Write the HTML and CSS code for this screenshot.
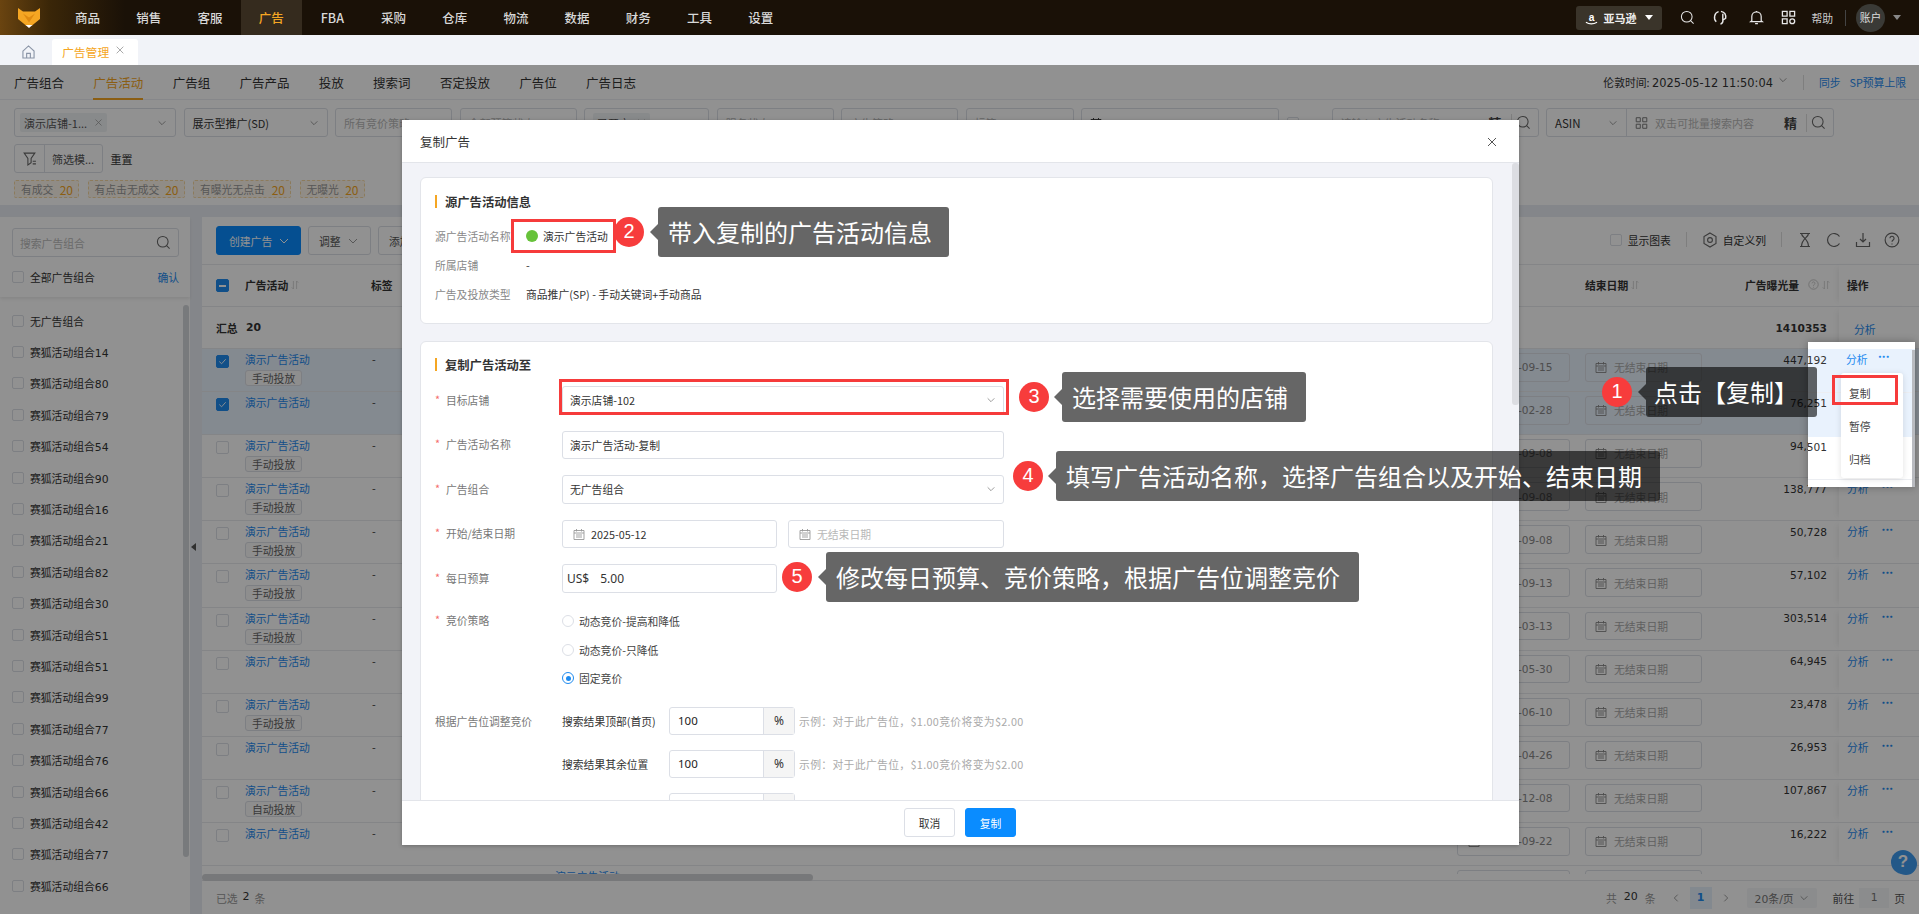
FILE: index.html
```html
<!DOCTYPE html>
<html lang="zh-CN">
<head>
<meta charset="utf-8">
<title>复制广告</title>
<link rel="stylesheet" href="styles.css">
</head>
<body>
<svg class="defs" width="0" height="0">
  <symbol id="i-search" viewBox="0 0 16 16"><circle cx="7.2" cy="7.2" r="5.7" fill="none" stroke="currentColor" stroke-width="1.1"/><path d="M11.3 11.3l3.2 3.2" fill="none" stroke="currentColor" stroke-width="1.1"/></symbol>
  <symbol id="i-chev" viewBox="0 0 12 12"><path d="M2 4l4 4 4-4" fill="none" stroke="currentColor" stroke-width="1"/></symbol>
  <symbol id="i-cal" viewBox="0 0 12 12"><path d="M1 2.5h10v9H1zM1 5h10M3.5 1v2.5M8.500 1v2.500M3 7h6M3 9h6" fill="none" stroke="currentColor" stroke-width=".9"/></symbol>
  <symbol id="i-x" viewBox="0 0 12 12"><path d="M2 2l8 8M10 2l-8 8" fill="none" stroke="currentColor" stroke-width="1"/></symbol>
  <symbol id="i-sort" viewBox="0 0 10 12"><path d="M3 1v10L1 9M7 11V1l2 2" fill="none" stroke="currentColor" stroke-width="1"/></symbol>
  <symbol id="i-grid" viewBox="0 0 16 16"><path d="M1.500 1.500h5v5h-5zM9.500 1.500h5v5h-5zM1.500 9.500h5v5h-5zM9.500 9.500h5v5h-5z" fill="none" stroke="currentColor" stroke-width="1.200"/></symbol>
  <symbol id="i-check" viewBox="0 0 12 12"><path d="M2.500 6l2.500 2.500 4.500-5" fill="none" stroke="#fff" stroke-width="1"/></symbol>
  <symbol id="i-q" viewBox="0 0 14 14"><circle cx="7" cy="7" r="6" fill="none" stroke="currentColor" stroke-width="1"/><path d="M5.200 5.500a1.800 1.800 0 1 1 2.800 1.500c-.7.500-1 .8-1 1.600M7 10v1" fill="none" stroke="currentColor" stroke-width="1"/></symbol>
</svg>

<div class="app">
  <header class="topbar">
    <svg class="logo" viewBox="0 0 22 20"><path d="M0 0l5 3.500h12L22 0v11l-8 6.500H8L0 11z" fill="#f5a623"/><path d="M5 5.500l6 4 6-4-6 9z" fill="#e08a10"/><path d="M7.500 17h7L11 20z" fill="#fff"/></svg>
    <nav class="mainnav">
      <a class="navitem">商品</a><a class="navitem">销售</a><a class="navitem">客服</a><a class="navitem navitem-on">广告</a><a class="navitem">FBA</a><a class="navitem">采购</a><a class="navitem">仓库</a><a class="navitem">物流</a><a class="navitem">数据</a><a class="navitem">财务</a><a class="navitem">工具</a><a class="navitem">设置</a>
    </nav>
    <div class="topright">
      <div class="market">
        <svg class="market-a" viewBox="0 0 14 16"><text x="7" y="11" text-anchor="middle" class="market-glyph">a</text><path d="M1 12.500c3.500 2.300 8 2.300 12 0" fill="none" stroke="#fff" stroke-width="1.300"/></svg>
        <span>亚马逊</span><i class="caret"></i>
      </div>
      <svg class="topicon ti-search" viewBox="0 0 16 16"><use href="#i-search"/></svg>
      <svg class="topicon ti-head" viewBox="0 0 16 16"><path d="M4 12.500C.8 9.500 1.800 3 6.500 1.800M9 1.500c3.800.8 5.600 3.800 5 7.500L11 10.800V4M8.500 15c1.800-.4 2.700-1.800 2.700-4.200" fill="none" stroke="#e8e8e8" stroke-width="1.500"/></svg>
      <svg class="topicon ti-bell" viewBox="0 0 16 16"><path d="M3 11.500V7a5 5 0 0 1 10 0v4.500l1.200 1H1.800zM6.500 14.500h3M8 1v1" fill="none" stroke="#e8e8e8" stroke-width="1.300"/></svg>
      <svg class="topicon ti-apps" viewBox="0 0 16 16"><path d="M1.500 1.500h5v5h-5zM9.500 1.500h5v5h-5zM1.500 9.500h5v5h-5z" fill="none" stroke="#e8e8e8" stroke-width="1.400"/><circle cx="12" cy="12" r="2.600" fill="none" stroke="#e8e8e8" stroke-width="1.400"/></svg>
      <span class="help-t">帮助</span>
      <i class="topdiv"></i>
      <span class="avatar">账户</span>
      <i class="caret caret-dim"></i>
    </div>
  </header>

  <div class="tabbar">
    <svg class="home" viewBox="0 0 14 15"><path d="M1 6.500L7 1l6 5.500V14H1zM5 14V9h4v5" fill="none" stroke="#8a94a6" stroke-width="1.200"/></svg>
    <div class="tab"><span>广告管理</span><svg class="tab-x" viewBox="0 0 12 12"><use href="#i-x"/></svg></div>
  </div>

  <main class="page">
    <div class="subnav">
      <a class="sub">广告组合</a><a class="sub sub-on">广告活动</a><a class="sub">广告组</a><a class="sub">广告产品</a><a class="sub">投放</a><a class="sub">搜索词</a><a class="sub">否定投放</a><a class="sub">广告位</a><a class="sub">广告日志</a>
      <div class="subright">
        <span class="clock">伦敦时间: <span class="dv">2025-05-12 11:50:04</span></span>
        <svg class="ic10 clock-ch" viewBox="0 0 12 12"><use href="#i-chev"/></svg>
        <i class="vline"></i>
        <a class="lnk">同步</a><a class="lnk lnk2">SP预算上限</a>
      </div>
    </div>

    <section class="filters">
      <div class="frow">
        <div class="fbox w162"><span class="ftag">演示店铺-1... <svg class="ic9" viewBox="0 0 12 12"><use href="#i-x"/></svg></span><svg class="ic10 end" viewBox="0 0 12 12"><use href="#i-chev"/></svg></div>
        <div class="fbox w144"><span>展示型推广(SD)</span><svg class="ic10 end" viewBox="0 0 12 12"><use href="#i-chev"/></svg></div>
        <div class="fbox w117 ph"><span>所有竞价策略</span></div>
        <div class="fbox w117 ph"><span>全部预算状态</span></div>
        <div class="fbox w125"><span class="ftag">已开启 <svg class="ic9" viewBox="0 0 12 12"><use href="#i-x"/></svg></span></div>
        <div class="fbox w117 ph"><span>服务状态</span></div>
        <div class="fbox w117 ph"><span>广告策略</span></div>
        <div class="fbox w108 ph"><span>标签</span></div>
        <div class="fbox w198"><svg class="ic12" viewBox="0 0 12 12"><use href="#i-cal"/></svg><span class="datepair">2025-05-01 ~ 2025-05-07</span></div>
        <i class="cb cb-f"></i><span class="dots3">...</span>
        <div class="fbox w207 ph"><span>请输入广告活动名称</span><b class="jing">精</b><i class="vsep"></i><svg class="ic14" viewBox="0 0 16 16"><use href="#i-search"/></svg></div>
        <div class="fbox w288 fbox-asin">
          <div class="asin"><span>ASIN</span><svg class="ic10" viewBox="0 0 12 12"><use href="#i-chev"/></svg></div>
          <svg class="ic14 gridic" viewBox="0 0 16 16"><use href="#i-grid"/></svg><span class="ph-t">双击可批量搜索内容</span><b class="jing jing2">精</b><i class="vsep"></i><svg class="ic14" viewBox="0 0 16 16"><use href="#i-search"/></svg>
        </div>
      </div>
      <div class="frow">
        <div class="fsave"><span class="fsave-ic"><svg class="ic14" viewBox="0 0 14 14"><path d="M2 2h10L8.500 7v4l-3 2V7zM10 9.500h3M10 12h3" fill="none" stroke="currentColor" stroke-width="1"/></svg></span><span class="fsave-t">筛选模...</span></div>
        <span class="reset">重置</span>
      </div>
      <div class="chips">
        <span class="chip w65">有成交<b>20</b></span><span class="chip w97">有点击无成交<b>20</b></span><span class="chip w98">有曝光无点击<b>20</b></span><span class="chip w65">无曝光<b>20</b></span>
      </div>
    </section>

    <div class="panels">
      <aside class="side">
        <div class="side-head">
          <div class="sinput"><span>搜索广告组合</span><svg class="ic14" viewBox="0 0 16 16"><use href="#i-search"/></svg></div>
          <div class="sall"><i class="cb"></i><span>全部广告组合</span><a class="lnk sok">确认</a></div>
        </div>
        <ul class="slist">
          <li><i class="cb"></i>无广告组合</li>
          <li><i class="cb"></i>赛狐活动组合14</li>
          <li><i class="cb"></i>赛狐活动组合80</li>
          <li><i class="cb"></i>赛狐活动组合79</li>
          <li><i class="cb"></i>赛狐活动组合54</li>
          <li><i class="cb"></i>赛狐活动组合90</li>
          <li><i class="cb"></i>赛狐活动组合16</li>
          <li><i class="cb"></i>赛狐活动组合21</li>
          <li><i class="cb"></i>赛狐活动组合82</li>
          <li><i class="cb"></i>赛狐活动组合30</li>
          <li><i class="cb"></i>赛狐活动组合51</li>
          <li><i class="cb"></i>赛狐活动组合51</li>
          <li><i class="cb"></i>赛狐活动组合99</li>
          <li><i class="cb"></i>赛狐活动组合77</li>
          <li><i class="cb"></i>赛狐活动组合76</li>
          <li><i class="cb"></i>赛狐活动组合66</li>
          <li><i class="cb"></i>赛狐活动组合42</li>
          <li><i class="cb"></i>赛狐活动组合77</li>
          <li><i class="cb"></i>赛狐活动组合66</li>
        </ul>
        <i class="side-scroll"></i>
      </aside>
      <div class="gutter"><span class="handle"></span></div>
      <section class="tablewrap">
        <div class="toolbar">
          <button class="btn btn-p">创建广告<svg class="ic12" viewBox="0 0 12 12"><use href="#i-chev"/></svg></button>
          <button class="btn">调整<svg class="ic12" viewBox="0 0 12 12"><use href="#i-chev"/></svg></button>
          <button class="btn">添加标签</button>
          <div class="tools">
            <i class="cb"></i><span class="t-show">显示图表</span><i class="vline"></i>
            <svg class="ic16" viewBox="0 0 16 16"><path d="M8 1l6 3.500v7L8 15l-6-3.500v-7z" fill="none" stroke="currentColor" stroke-width="1.100"/><circle cx="8" cy="8" r="2.400" fill="none" stroke="currentColor" stroke-width="1.100"/></svg><span class="t-col">自定义列</span><i class="vline"></i>
            <svg class="ic16" viewBox="0 0 16 16"><path d="M3 1.500h10M3 14.500h10M4.500 1.500c0 4 7 5 7 13M11.500 1.500c0 4-7 5-7 13" fill="none" stroke="currentColor" stroke-width="1.200"/></svg>
            <svg class="ic16" viewBox="0 0 16 16"><path d="M13.500 4.500A6.500 6.500 0 1 0 13.500 11.500" fill="none" stroke="currentColor" stroke-width="1.200"/></svg>
            <svg class="ic16" viewBox="0 0 16 16"><path d="M8 1v9M5 7l3 3 3-3M1.500 10v4.500h13V10" fill="none" stroke="currentColor" stroke-width="1.200"/></svg>
            <svg class="ic16" viewBox="0 0 14 14"><use href="#i-q"/></svg>
          </div>
        </div>

        <div class="tr thead">
          <span><i class="cb cb-tb cb-on cb-ind"></i></span>
          <span class="th">广告活动<svg class="sort" viewBox="0 0 10 12"><use href="#i-sort"/></svg></span>
          <span class="th">标签</span>
          <span></span>
          <span class="th">结束日期<svg class="sort" viewBox="0 0 10 12"><use href="#i-sort"/></svg></span>
          <span class="th th-num">广告曝光量<svg class="qm" viewBox="0 0 14 14"><use href="#i-q"/></svg><svg class="sort" viewBox="0 0 10 12"><use href="#i-sort"/></svg></span>
          <span></span>
          <span class="th op">操作</span>
        </div>
        <div class="tr tsum">
          <span class="th sumlab">汇总</span>
          <span class="th dv sumval">20</span>
          <span></span><span></span><span></span>
          <span class="num numb">1410353</span>
          <span></span>
          <span class="op"><a class="lnk sum-an">分析</a></span>
        </div>

        <div class="tbody">
          <div class="tr row row-sel"><span><i class="cb cb-tb cb-on"><svg viewBox="0 0 12 12"><use href="#i-check"/></svg></i></span><span class="camp"><a class="lnk">演示广告活动</a><em class="tag">手动投放</em></span><span class="dash">-</span><span class="dbox dbox-s"><svg class="ic12" viewBox="0 0 12 12"><use href="#i-cal"/></svg>2023-09-15</span><span class="dbox"><svg class="ic12" viewBox="0 0 12 12"><use href="#i-cal"/></svg>无结束日期</span><span class="num">447,192</span><span></span><span class="op"><a class="lnk">分析</a><b class="more">•••</b></span></div>
          <div class="tr row row-sel"><span><i class="cb cb-tb cb-on"><svg viewBox="0 0 12 12"><use href="#i-check"/></svg></i></span><span class="camp"><a class="lnk">演示广告活动</a></span><span class="dash">-</span><span class="dbox dbox-s"><svg class="ic12" viewBox="0 0 12 12"><use href="#i-cal"/></svg>2024-02-28</span><span class="dbox"><svg class="ic12" viewBox="0 0 12 12"><use href="#i-cal"/></svg>无结束日期</span><span class="num">76,251</span><span></span><span class="op"><a class="lnk">分析</a><b class="more">•••</b></span></div>
          <div class="tr row"><span><i class="cb cb-tb"></i></span><span class="camp"><a class="lnk">演示广告活动</a><em class="tag">手动投放</em></span><span class="dash">-</span><span class="dbox dbox-s"><svg class="ic12" viewBox="0 0 12 12"><use href="#i-cal"/></svg>2023-09-08</span><span class="dbox"><svg class="ic12" viewBox="0 0 12 12"><use href="#i-cal"/></svg>无结束日期</span><span class="num">94,501</span><span></span><span class="op"><a class="lnk">分析</a><b class="more">•••</b></span></div>
          <div class="tr row"><span><i class="cb cb-tb"></i></span><span class="camp"><a class="lnk">演示广告活动</a><em class="tag">手动投放</em></span><span class="dash">-</span><span class="dbox dbox-s"><svg class="ic12" viewBox="0 0 12 12"><use href="#i-cal"/></svg>2023-09-08</span><span class="dbox"><svg class="ic12" viewBox="0 0 12 12"><use href="#i-cal"/></svg>无结束日期</span><span class="num">138,777</span><span></span><span class="op"><a class="lnk">分析</a><b class="more">•••</b></span></div>
          <div class="tr row"><span><i class="cb cb-tb"></i></span><span class="camp"><a class="lnk">演示广告活动</a><em class="tag">手动投放</em></span><span class="dash">-</span><span class="dbox dbox-s"><svg class="ic12" viewBox="0 0 12 12"><use href="#i-cal"/></svg>2023-09-08</span><span class="dbox"><svg class="ic12" viewBox="0 0 12 12"><use href="#i-cal"/></svg>无结束日期</span><span class="num">50,728</span><span></span><span class="op"><a class="lnk">分析</a><b class="more">•••</b></span></div>
          <div class="tr row"><span><i class="cb cb-tb"></i></span><span class="camp"><a class="lnk">演示广告活动</a><em class="tag">手动投放</em></span><span class="dash">-</span><span class="dbox dbox-s"><svg class="ic12" viewBox="0 0 12 12"><use href="#i-cal"/></svg>2023-09-13</span><span class="dbox"><svg class="ic12" viewBox="0 0 12 12"><use href="#i-cal"/></svg>无结束日期</span><span class="num">57,102</span><span></span><span class="op"><a class="lnk">分析</a><b class="more">•••</b></span></div>
          <div class="tr row"><span><i class="cb cb-tb"></i></span><span class="camp"><a class="lnk">演示广告活动</a><em class="tag">手动投放</em></span><span class="dash">-</span><span class="dbox dbox-s"><svg class="ic12" viewBox="0 0 12 12"><use href="#i-cal"/></svg>2024-03-13</span><span class="dbox"><svg class="ic12" viewBox="0 0 12 12"><use href="#i-cal"/></svg>无结束日期</span><span class="num">303,514</span><span></span><span class="op"><a class="lnk">分析</a><b class="more">•••</b></span></div>
          <div class="tr row"><span><i class="cb cb-tb"></i></span><span class="camp"><a class="lnk">演示广告活动</a></span><span class="dash">-</span><span class="dbox dbox-s"><svg class="ic12" viewBox="0 0 12 12"><use href="#i-cal"/></svg>2023-05-30</span><span class="dbox"><svg class="ic12" viewBox="0 0 12 12"><use href="#i-cal"/></svg>无结束日期</span><span class="num">64,945</span><span></span><span class="op"><a class="lnk">分析</a><b class="more">•••</b></span></div>
          <div class="tr row"><span><i class="cb cb-tb"></i></span><span class="camp"><a class="lnk">演示广告活动</a><em class="tag">手动投放</em></span><span class="dash">-</span><span class="dbox dbox-s"><svg class="ic12" viewBox="0 0 12 12"><use href="#i-cal"/></svg>2023-06-10</span><span class="dbox"><svg class="ic12" viewBox="0 0 12 12"><use href="#i-cal"/></svg>无结束日期</span><span class="num">23,478</span><span></span><span class="op"><a class="lnk">分析</a><b class="more">•••</b></span></div>
          <div class="tr row"><span><i class="cb cb-tb"></i></span><span class="camp"><a class="lnk">演示广告活动</a></span><span class="dash">-</span><span class="dbox dbox-s"><svg class="ic12" viewBox="0 0 12 12"><use href="#i-cal"/></svg>2024-04-26</span><span class="dbox"><svg class="ic12" viewBox="0 0 12 12"><use href="#i-cal"/></svg>无结束日期</span><span class="num">26,953</span><span></span><span class="op"><a class="lnk">分析</a><b class="more">•••</b></span></div>
          <div class="tr row"><span><i class="cb cb-tb"></i></span><span class="camp"><a class="lnk">演示广告活动</a><em class="tag">自动投放</em></span><span class="dash">-</span><span class="dbox dbox-s"><svg class="ic12" viewBox="0 0 12 12"><use href="#i-cal"/></svg>2023-12-08</span><span class="dbox"><svg class="ic12" viewBox="0 0 12 12"><use href="#i-cal"/></svg>无结束日期</span><span class="num">107,867</span><span></span><span class="op"><a class="lnk">分析</a><b class="more">•••</b></span></div>
          <div class="tr row"><span><i class="cb cb-tb"></i></span><span class="camp"><a class="lnk">演示广告活动</a></span><span class="dash">-</span><span class="dbox dbox-s"><svg class="ic12" viewBox="0 0 12 12"><use href="#i-cal"/></svg>2023-09-22</span><span class="dbox"><svg class="ic12" viewBox="0 0 12 12"><use href="#i-cal"/></svg>无结束日期</span><span class="num">16,222</span><span></span><span class="op"><a class="lnk">分析</a><b class="more">•••</b></span></div>
          <div class="tr row row-last"><span></span><span></span><span class="dash dash-last"><a class="lnk">演示广告活动</a><span class="dash-far">-</span></span><span class="dbox dbox-s"></span><span class="dbox"></span><span class="num"></span><span></span><span></span></div>
        </div>
        <i class="hscroll"></i>

        <footer class="tfoot">
          <span class="sel">已选 <b class="dv">2</b> 条</span>
          <div class="pager">
            <span class="sel sel-w">共 <b class="dv">20</b> 条</span>
            <svg class="ic10 pgl" viewBox="0 0 12 12"><use href="#i-chev"/></svg>
            <span class="pg1 dv">1</span>
            <svg class="ic10 pgr" viewBox="0 0 12 12"><use href="#i-chev"/></svg>
            <span class="psize dv">20条/页<svg class="ic10" viewBox="0 0 12 12"><use href="#i-chev"/></svg></span>
            <span class="goto">前往</span><span class="gobox dv">1</span><span class="goto">页</span>
          </div>
        </footer>
      </section>
    </div>
    <span class="helpbub">?</span>
    <div class="overlay"></div>
  </main>
</div>

<div class="dialog">
  <div class="d-head"><span>复制广告</span><svg class="d-x" viewBox="0 0 12 12"><use href="#i-x"/></svg></div>
  <div class="d-body">
    <section class="card card1">
      <h3 class="ctitle">源广告活动信息</h3>
      <div class="inforow"><span class="il">源广告活动名称</span><span class="iv"><i class="dot"></i>演示广告活动</span></div>
      <div class="inforow"><span class="il">所属店铺</span><span class="iv">-</span></div>
      <div class="inforow"><span class="il">广告及投放类型</span><span class="iv">商品推广(SP) - 手动关键词+手动商品</span></div>
    </section>
    <section class="card card2">
      <h3 class="ctitle">复制广告活动至</h3>
      <div class="frm"><label><i>*</i>目标店铺</label><div class="inp"><span>演示店铺-102</span><svg class="ic10 end" viewBox="0 0 12 12"><use href="#i-chev"/></svg></div></div>
      <div class="frm"><label><i>*</i>广告活动名称</label><div class="inp"><span>演示广告活动-复制</span></div></div>
      <div class="frm"><label><i>*</i>广告组合</label><div class="inp"><span>无广告组合</span><svg class="ic10 end" viewBox="0 0 12 12"><use href="#i-chev"/></svg></div></div>
      <div class="frm"><label><i>*</i>开始/结束日期</label><div class="inp2"><div class="inp"><svg class="ic12 calic" viewBox="0 0 12 12"><use href="#i-cal"/></svg><span>2025-05-12</span></div><div class="inp"><svg class="ic12 calic" viewBox="0 0 12 12"><use href="#i-cal"/></svg><span class="ph-t">无结束日期</span></div></div></div>
      <div class="frm"><label><i>*</i>每日预算</label><div class="inp2"><div class="inp inp-money"><span class="cur">US$</span><span class="cur">5.00</span></div><div></div></div></div>
      <div class="frm frm-radio"><label><i>*</i>竞价策略</label>
        <div class="radios">
          <div class="radio"><i class="rd"></i>动态竞价-提高和降低</div>
          <div class="radio"><i class="rd"></i>动态竞价-只降低</div>
          <div class="radio"><i class="rd rd-on"></i>固定竞价</div>
        </div>
      </div>
      <div class="pl"><label>根据广告位调整竞价</label><span class="pl-n">搜索结果顶部(首页)</span><div class="pct"><span>100</span><b>%</b></div><span class="hint">示例：对于此广告位，$1.00竞价将变为$2.00</span></div>
      <div class="pl"><label></label><span class="pl-n">搜索结果其余位置</span><div class="pct"><span>100</span><b>%</b></div><span class="hint">示例：对于此广告位，$1.00竞价将变为$2.00</span></div>
      <div class="pl"><label></label><span class="pl-n"></span><div class="pct"><span>100</span><b>%</b></div></div>
    </section>
    <i class="d-scroll"></i>
  </div>
  <div class="d-foot"><button class="dbtn">取消</button><button class="dbtn dbtn-p">复制</button></div>
</div>

<div class="crop">
  <div class="crop-band"></div>
  <span class="c-num c-n1">447,192</span><span class="c-num c-n2">76,251</span><span class="c-num c-n3">94,501</span>
  <i class="c-line c-l1"></i><i class="c-line c-l2"></i>
  <a class="c-an">分析</a><b class="c-more">•••</b>
  <i class="c-bar"></i>
  <div class="menu"><span>复制</span><span>暂停</span><span>归档</span></div>
</div>

<i class="redbox rb1"></i><i class="redbox rb2"></i><i class="redbox rb3"></i>

<span class="num-c nc1">1</span><div class="callout co1">点击【复制】</div>
<span class="num-c nc2">2</span><div class="callout co2">带入复制的广告活动信息</div>
<span class="num-c nc3">3</span><div class="callout co3">选择需要使用的店铺</div>
<span class="num-c nc4">4</span><div class="callout co4">填写广告活动名称，选择广告组合以及开始、结束日期</div>
<span class="num-c nc5">5</span><div class="callout co5">修改每日预算、竞价策略，根据广告位调整竞价</div>
</body>
</html>
```

FILE: styles.css
```css
* { box-sizing: border-box; }
html, body { margin: 0; padding: 0; height: 914px; overflow: hidden; }
body { position: relative; width: 1919px; font-family: "Noto Sans CJK SC", "Noto Sans", sans-serif; font-size: 10.8px; color: #333; background: #fff; }
i, em { font-style: normal; }
a { color: inherit; text-decoration: none; }
ul { margin: 0; padding: 0; list-style: none; }
h3 { margin: 0; }
button { font-family: inherit; }
svg { display: block; flex: none; }
.defs { position: absolute; }
.dv { font-family: "DejaVu Sans", "Noto Sans CJK SC", sans-serif; }

.ic9 { width: 9px; height: 9px; }
.ic10 { width: 10px; height: 10px; color: #888; }
.ic12 { width: 12px; height: 12px; }
.ic14 { width: 15px; height: 15px; color: #666; }
.ic16 { width: 16px; height: 16px; color: #555; }
.end { margin-left: auto; }

.app { display: flex; flex-direction: column; height: 914px; }

/* top bar */
.topbar { height: 35px; flex: none; display: flex; align-items: center; background: linear-gradient(90deg, #6a4410 0, #3a2608 50px, #1a1107 125px, #1a1107 100%); color: #ddd; }
.logo { width: 22px; height: 20px; margin-left: 18px; margin-top: 1px; }
.mainnav { display: flex; margin-left: 17px; height: 35px; }
.navitem { width: 61.2px; line-height: 35px; text-align: center; font-size: 12.5px; font-weight: 500; color: #d8d8d8; }
.navitem-on { background: #352b1e; color: #f5a623; }
.topright { margin-left: auto; display: flex; align-items: center; height: 35px; padding-right: 18px; }
.market { width: 86px; height: 24px; background: #3a342a; border-radius: 3px; display: flex; align-items: center; padding-left: 9px; font-size: 11px; font-weight: 700; color: #eee; gap: 5px; }
.market-a { width: 13px; height: 16px; }
.market-glyph { font: 700 11px "Liberation Sans", sans-serif; fill: #fff; }
.caret { width: 0; height: 0; border: 4px solid transparent; border-top: 5px solid #fff; border-bottom: 0; margin-left: 4px; }
.caret-dim { border-top-color: #888; margin-left: 8px; }
.topicon { width: 15px; height: 15px; color: #e8e8e8; }
.ti-search { margin-left: 18px; }
.ti-head { margin-left: 17px; width: 16px; }
.ti-bell { margin-left: 21px; }
.ti-apps { margin-left: 17px; }
.help-t { margin-left: 15px; font-size: 10.8px; color: #ccc; }
.topdiv { width: 1px; height: 16px; background: #444; margin-left: 12px; }
.avatar { width: 29px; height: 28px; border-radius: 50%; background: #3a3a36; margin-left: 10px; text-align: center; line-height: 26px; font-size: 10.8px; color: #ddd; }

/* tab bar */
.tabbar { height: 30px; flex: none; background: #f1f3f8; display: flex; align-items: flex-end; }
.home { width: 13px; height: 14px; margin: 0 0 6px 22px; }
.tab { width: 86px; height: 26px; margin-left: 17px; background: #fff; border-radius: 3px 3px 0 0; display: flex; align-items: center; padding: 0 0 2px 10px; color: #f5a623; font-size: 11.8px; }
.tab-x { width: 10px; height: 10px; margin: -3px 0 0 6px; color: #999; }

/* page */
.page { position: relative; flex: 1; display: flex; flex-direction: column; min-height: 0; background: #e9ecf2; }
.subnav { height: 35px; flex: none; display: flex; align-items: stretch; gap: 29.300px; padding-left: 14px; background: #fff; border-bottom: 1px solid #eceef2; }
.sub { font-size: 12.5px; line-height: 36px; border-bottom: 2px solid transparent; height: 35px; color: #333; }
.sub-on { color: #f5a623; border-bottom-color: #f5a623; }
.subright { margin-left: auto; display: flex; align-items: center; padding-right: 13px; }
.clock { font-size: 10.8px; }
.clock .dv { font-size: 11.4px; }
.clock-ch { margin-left: 5px; margin-top: -4px; }
.vline { width: 1px; height: 15px; background: #ddd; margin: 0 15px; }
.lnk { color: #1e8bf0; }
.lnk2 { margin-left: 9px; }

.filters { flex: none; background: #fff; padding: 8px 14px 7px; }
.frow { display: flex; align-items: center; gap: 7.500px; height: 29px; margin-bottom: 7px; }
.fbox { height: 29px; border: 1px solid #dcdfe6; border-radius: 3px; display: flex; align-items: center; padding: 0 8px; font-size: 11px; flex: none; background: #fff; }
.w162 { width: 162px; padding-left: 5px; }
.w144 { width: 144px; }
.w117 { width: 117px; }
.w125 { width: 125px; }
.w108 { width: 108px; }
.w198 { width: 198px; gap: 7px; }
.w207 { width: 207px; margin-left: 5px; }
.w288 { width: 288px; padding: 0; }
.ph { color: #b8b8b8; }
.ftag { background: #f0f2f5; border-radius: 2px; padding: 0 4px; height: 19px; display: flex; align-items: center; gap: 7px; white-space: nowrap; color: #555; }
.ftag .ic9 { color: #999; }
.datepair { word-spacing: 6px; }
.cb { width: 12px; height: 12px; border: 1px solid #dcdfe6; border-radius: 2px; background: #fff; display: inline-block; flex: none; }
.cb-f { margin-left: 0; }
.dots3 { margin-left: 4px; color: #777; }
.jing { margin-left: auto; font-size: 13px; font-weight: 700; color: #444; }
.vsep { width: 1px; height: 18px; background: #ddd; margin: 0 4px 0 9px; }
.asin { width: 80px; height: 27px; border-right: 1px solid #dcdfe6; display: flex; align-items: center; justify-content: space-between; padding: 0 8px; font-size: 11.5px; }
.gridic { margin-left: 8px; width: 13px; height: 14px; color: #777; }
.ph-t { color: #b8b8b8; }
.asin ~ .ph-t { margin-left: 7px; font-size: 11px; }
.jing2 { margin-left: auto; }
.asin ~ .ic14:last-child { margin-right: 7px; }
.w207 .ic14 { margin-right: -1px; }
.fsave { width: 89px; height: 29px; border: 1px solid #dcdfe6; border-radius: 3px; display: flex; align-items: center; font-size: 11px; flex: none; }
.fsave-ic { width: 30px; height: 27px; border-right: 1px solid #dcdfe6; display: flex; align-items: center; justify-content: center; }
.fsave-t { padding-left: 7px; color: #555; }
.reset { margin-left: 0; font-size: 11px; padding-left: 0; }
.chips { display: flex; gap: 8.500px; height: 18px; }
.chip { height: 18px; border: 1px dashed #f7d9a3; background: #fdf6ec; border-radius: 2px; display: flex; align-items: center; justify-content: space-between; padding: 0 5px 0 6px; font-size: 10.8px; color: #999; }
.chip b { color: #f5a623; font-weight: 400; font-size: 12px; }
.w65 { width: 65px; }
.w97 { width: 97px; }
.w98 { width: 98px; }

.panels { margin-top: 12px; flex: 1; display: flex; min-height: 0; }
.side { position: relative; width: 190px; flex: none; background: #fff; }
.side-head { height: 80px; padding: 11px 11px 0 12px; box-shadow: 0 2px 3px rgba(0,0,0,.08); position: relative; }
.sinput { height: 29px; border: 1px solid #dcdfe6; border-radius: 3px; display: flex; align-items: center; justify-content: space-between; padding: 0 7px; color: #bbb; font-size: 10.8px; }
.sall { display: flex; align-items: center; gap: 6px; margin-top: 12px; }
.sok { margin-left: auto; }
.slist { padding: 8px 0 0 12px; }
.slist li { height: 31.400px; display: flex; align-items: center; gap: 6px; font-family: "DejaVu Sans", "Noto Sans CJK SC", sans-serif; font-size: 10.8px; }
.side-scroll { position: absolute; left: 183px; top: 88px; width: 6px; height: 552px; border-radius: 3px; background: #d4d6da; }
.gutter { width: 12px; flex: none; position: relative; }
.handle { position: absolute; left: 1px; top: 326px; width: 0; height: 0; border: 4px solid transparent; border-right: 5px solid #555; border-left: 0; }
.tablewrap { position: relative; flex: 1; min-width: 0; background: #fff; display: flex; flex-direction: column; }
.toolbar { height: 48px; flex: none; display: flex; align-items: flex-start; padding: 9px 0 0 14px; gap: 7px; border-bottom: 1px solid #e8eaee; }
.btn { height: 29px; padding: 0 10px; border: 1px solid #dcdfe6; background: #fff; border-radius: 3px; font-size: 10.8px; color: #555; display: flex; align-items: center; gap: 6px; white-space: nowrap; }
.btn .ic12 { color: #999; }
.btn-p { width: 85px; background: #0a8cff; border-color: #0a8cff; color: #fff; padding: 0 12px; }
.btn-p .ic12 { color: #fff; }
.btn:nth-child(2) { width: 63px; }
.tools { margin-left: auto; display: flex; align-items: center; height: 29px; padding-right: 19px; margin-top: -1px; }
.t-show { margin-left: 6px; }
.tools .vline { margin: 0 15px; }
.tools .ic16 { color: #666; }
.tools .ic16:nth-last-child(-n+3) { margin-left: 13px; }
.tools .vline + .ic16 + .t-col + .vline { margin-right: 15px; }
.t-col { margin-left: 5px; }

.tr { display: grid; grid-template-columns: 29px 126px 1fr 128px 117px 125px 12px 73px; padding: 0 7px 0 14px; border-bottom: 1px solid #e8eaee; }
.thead { height: 42px; align-items: center; flex: none; }
.thead .th { margin-top: -2px; }
.tsum { height: 42px; align-items: center; flex: none; }
.th { font-weight: 700; display: flex; align-items: center; color: #333; }
.th-num { justify-content: flex-end; margin-right: -3px; }
.sort { width: 8px; height: 10px; margin-left: 3px; color: #ccc; }
.qm { width: 11px; height: 11px; margin-left: 9px; color: #bbb; }
.op { box-shadow: -5px 0 6px -4px rgba(0,0,0,.08); height: 100%; padding-left: 8px; display: flex; align-items: flex-start; }
.thead .op, .tsum .op { align-items: center; }
.sum-an { margin-left: 7px; }
.sumlab { margin-right: -1px; white-space: nowrap; }
.sumval { margin-left: 1px; font-size: 10.8px; }
.num { text-align: right; font-family: "DejaVu Sans", sans-serif; font-size: 10.6px; color: #333; padding-top: 4.500px; }
.numb { font-weight: 700; padding-top: 0; }
.tbody { height: 525px; flex: none; overflow: hidden; }
.row { height: 43.100px; align-items: start; padding-top: 0; }
.row > span:first-child { padding-top: 6px; display: block; }
.row-sel { background: #e9f2fd; }
.cb-tb { width: 13px; height: 13px; }
.cb-on { background: #1e8bf0; border-color: #1e8bf0; }
.cb-on svg { width: 11px; height: 11px; }
.thead > span:first-child { display: flex; }
.cb-ind { position: relative; }
.cb-ind::after { content: ""; position: absolute; left: 2px; right: 2px; top: 4.500px; height: 2px; background: #fff; }
.camp { display: flex; flex-direction: column; align-items: flex-start; padding-top: 3px; line-height: 15px; }
.tag { margin-top: 3px; height: 16px; line-height: 14px; padding: 0 6px; border: 1px solid #dcdfe6; border-radius: 3px; background: #f9f9f9; color: #666; }
.dash { padding: 3px 0 0 1px; line-height: 15px; }
.dash-last { display: flex; padding-left: 184px; }
.dash-far { margin-left: 205px; }
.dbox { height: 28.500px; margin-top: 4px; border: 1px solid #dcdfe6; border-radius: 3px; display: flex; align-items: center; padding-left: 9px; gap: 7px; color: #aaa; }
.dbox .ic12 { color: #888; }
.dbox-s { width: 113px; color: #888; padding-left: 10px; gap: 11px; font-family: "DejaVu Sans", sans-serif; font-size: 10.600px; white-space: nowrap; }
.op .lnk { padding-top: 3px; line-height: 15px; }
.more { margin-left: 13px; padding-top: 1px; line-height: 15px; color: #1e8bf0; font-family: "DejaVu Sans", sans-serif; font-weight: 700; font-size: 6px; }
.row-last { border: 0; }
.hscroll { position: absolute; left: 0; top: 657px; width: 611px; height: 7px; border-radius: 3.500px; background: #d2d3d6; }
.tfoot { flex: 1; border-top: 1px solid #e4e6ea; margin-top: 6px; display: flex; align-items: center; justify-content: space-between; padding: 0 14px 0 14px; }
.sel { color: #999; display: flex; gap: 5px; }
.sel-w { gap: 7px; }
.sel b { font-weight: 400; color: #333; font-size: 11px; }
.pager { display: flex; align-items: center; }
.pgl { transform: rotate(90deg); margin-left: 15px; }
.pg1 { width: 22px; height: 22px; margin-left: 9px; background: #e6f1fc; color: #1e8bf0; font-weight: 700; text-align: center; line-height: 22px; font-size: 11px; }
.pgr { transform: rotate(-90deg); margin-left: 9px; }
.psize { width: 70px; height: 20px; margin-left: 16px; background: #f5f6f8; border-radius: 2px; display: flex; align-items: center; justify-content: center; gap: 5px; color: #777; font-size: 10.8px; }
.goto { margin-left: 5px; color: #555; }
.psize + .goto { margin-left: 16px; }
.gobox { width: 30px; height: 20px; background: #f5f6f8; text-align: center; line-height: 20px; margin-left: 5px; color: #777; }
.helpbub { position: absolute; left: 1891px; top: 785px; width: 24px; height: 24px; border-radius: 50%; background: #3f9bf0; color: #fff; text-align: center; font: 700 17px/24px "Liberation Sans", sans-serif; box-shadow: 3px 2px 0 -1px #3f9bf0; }
.overlay { position: absolute; inset: 0; background: rgba(0,0,0,.43); }

/* dialog */
.dialog { position: absolute; left: 402px; top: 120px; width: 1117px; height: 725px; background: #fff; display: flex; flex-direction: column; box-shadow: 0 1px 4px rgba(0,0,0,.25); }
.d-head { height: 43px; flex: none; display: flex; align-items: center; justify-content: space-between; padding: 0 21px 0 18px; border-bottom: 1px solid #e3e5ea; font-size: 12.5px; }
.d-x { width: 12px; height: 12px; margin-top: 2px; color: #555; }
.d-body { position: relative; flex: 1; min-height: 0; overflow: hidden; background: #f2f3f8; padding: 14px 26px 0 18px; }
.d-scroll { position: absolute; right: 0; top: 0; width: 7px; height: 242px; background: #dcdde2; border-radius: 3px; }
.d-foot { height: 45px; flex: none; border-top: 1px solid #e3e5ea; display: flex; justify-content: flex-end; gap: 10px; padding: 7px 0 0; padding-right: 503px; }
.dbtn { width: 51px; height: 29px; border: 1px solid #dcdfe6; border-radius: 3px; background: #fff; color: #333; font-size: 10.8px; padding: 0; }
.dbtn-p { background: #0a8cff; border-color: #0a8cff; color: #fff; }
.card { background: #fff; border: 1px solid #e3e5ea; border-radius: 6px; padding: 0 14px; }
.card1 { height: 147px; margin-bottom: 17px; padding-top: 17px; }
.card2 { padding-top: 16px; height: 640px; }
.ctitle { font-size: 12.3px; font-weight: 700; line-height: 14px; border-left: 2px solid #f5a623; padding-left: 8px; color: #333; height: 13px; }
.inforow { display: flex; height: 29px; align-items: center; }
.ctitle + .inforow { margin-top: 13.500px; }
.il { width: 91px; color: #888; }
.iv { display: flex; align-items: center; gap: 5px; color: #333; }
.dot { width: 12px; height: 12px; border-radius: 50%; background: #67c23a; }
.frm { display: flex; height: 28.500px; margin-bottom: 16px; align-items: center; }
.ctitle + .frm { margin-top: 15px; }
.frm > label { width: 127px; flex: none; color: #777; display: flex; align-items: center; margin-top: -1px; }
.frm > label i { width: 11px; color: #f56c6c; margin-top: -2px; }
.inp { flex: 1; height: 28.500px; width: 442px; border: 1px solid #dcdfe6; border-radius: 3px; display: flex; align-items: center; padding: 0 7px; background: #fff; font-size: 10.8px; flex: none; }
.inp2 { display: grid; grid-template-columns: 215px 216px; gap: 11px; }
.inp2 .inp { width: auto; }
.calic { color: #999; margin: 0 6px 0 3px; }
.inp-money { padding-left: 4px; gap: 11px; }
.cur { font-size: 12px; font-family: "Noto Sans", sans-serif; }
.frm-radio { height: auto; align-items: flex-start; margin-bottom: 14px; margin-top: -1.500px; }
.frm-radio > label { height: 28.500px; }
.radios { display: flex; flex-direction: column; }
.radio { height: 28.500px; display: flex; align-items: center; gap: 5px; color: #444; }
.rd { width: 12px; height: 12px; border-radius: 50%; border: 1px solid #dcdfe6; background: #fff; }
.rd-on { border-color: #1e8bf0; position: relative; }
.rd-on::after { content: ""; position: absolute; inset: 2.500px; border-radius: 50%; background: #1e8bf0; }
.pl { display: flex; align-items: center; height: 28px; margin-bottom: 15px; }
.pl label { width: 127px; flex: none; color: #777; }
.pl-n { width: 107px; flex: none; }
.pct { width: 126px; height: 28px; border: 1px solid #dcdfe6; border-radius: 3px; display: flex; align-items: center; flex: none; background: #fff; }
.pct span { flex: 1; padding-left: 8px; font-size: 11.5px; color: #222; font-family: "Noto Sans", sans-serif; }
.pct b { width: 31px; height: 26px; border-left: 1px solid #dcdfe6; background: #f5f5f5; text-align: center; line-height: 26px; font-weight: 400; font-size: 12px; font-family: "Noto Sans", sans-serif; }
.hint { margin-left: 4px; color: #aaa; font-size: 10.8px; white-space: nowrap; letter-spacing: .35px; }

/* pasted crop with menu */
.crop { position: absolute; left: 1808px; top: 342px; width: 107px; height: 145px; background: #fff; overflow: hidden; box-shadow: 0 0 8px rgba(0,0,0,.3); }
.crop-band { position: absolute; left: 0; right: 0; top: 7px; height: 88px; background: #e9f2fd; }
.c-num { position: absolute; right: 88px; width: 60px; text-align: right; font-family: "DejaVu Sans", sans-serif; font-size: 10.6px; line-height: 14px; color: #333; }
.c-n1 { top: 11px; }
.c-n2 { top: 54px; }
.c-n3 { top: 98px; }
.c-line { position: absolute; left: 0; right: 0; height: 1px; background: #eceef2; }
.c-l1 { top: 50px; }
.c-l2 { top: 137px; }
.c-an { position: absolute; left: 38px; top: 10px; line-height: 15px; color: #1e8bf0; }
.c-more { position: absolute; left: 70px; top: 7px; line-height: 15px; font-family: "DejaVu Sans", sans-serif; font-size: 6px; font-weight: 700; color: #1e8bf0; }
.c-bar { position: absolute; right: 0; top: 8px; bottom: 0; width: 3px; background: #b9bbc0; }
.menu { position: absolute; left: 33px; top: 31px; width: 62px; height: 105px; background: #fff; border-radius: 3px; box-shadow: 0 1px 6px rgba(0,0,0,.12); display: flex; flex-direction: column; padding: 4px 0 0 8px; color: #444; }
.menu span { height: 33px; line-height: 33px; }

/* annotations */
.redbox { position: absolute; border: 3px solid #f63b3b; }
.rb1 { left: 1832px; top: 375px; width: 66px; height: 30px; }
.rb2 { left: 511px; top: 219px; width: 105px; height: 34px; }
.rb3 { left: 559px; top: 379px; width: 450px; height: 36px; }
.num-c { position: absolute; width: 30px; height: 30px; border-radius: 50%; background: #f73c3c; color: #fff; text-align: center; font: 20px/29px "Liberation Sans", sans-serif; }
.nc1 { left: 1602px; top: 377px; }
.nc2 { left: 614px; top: 217px; }
.nc3 { left: 1019px; top: 382px; }
.nc4 { left: 1013px; top: 461px; }
.nc5 { left: 782px; top: 562px; }
.callout { position: absolute; height: 50px; padding: 0 10px; background: rgba(0,0,0,.6); border-radius: 3px; color: #fff; font-size: 24px; line-height: 49px; white-space: nowrap; }
.callout::before { content: ""; position: absolute; left: -8px; top: 17px; width: 0; height: 0; border: 8px solid transparent; border-right-color: rgba(0,0,0,.6); border-left: 0; }
.co1 { left: 1646px; top: 367px; width: 171px; padding-left: 8px; }
.co2 { left: 658px; top: 207px; width: 291px; }
.co3 { left: 1062px; top: 372px; width: 244px; }
.co4 { left: 1056px; top: 451px; width: 604px; }
.co5 { left: 826px; top: 552px; width: 533px; }
```
